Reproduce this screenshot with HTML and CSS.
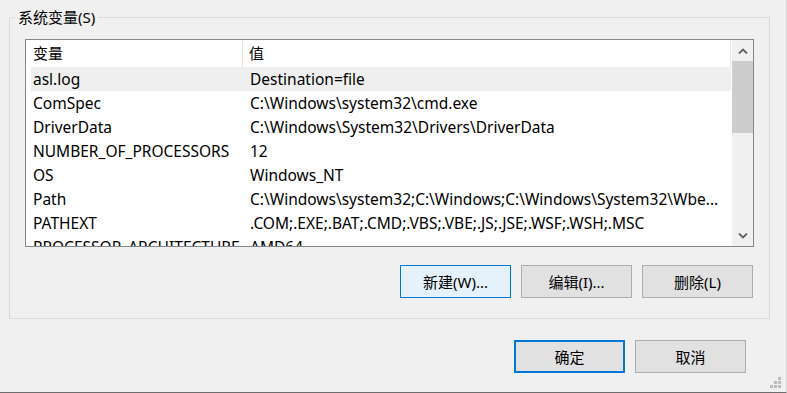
FILE: index.html
```html
<!DOCTYPE html>
<html lang="zh-CN">
<head>
    <meta charset="UTF-8">
    <title>系统变量</title>
    <link rel="stylesheet" href="styles.css">
</head>
<body>
    <fieldset class="group">
        <legend>系统变量(S)</legend>
        <div class="list">
            <div class="list-body">
                <div class="list-head">
                    <div class="col-name">变量</div>
                    <div class="col-value">值</div>
                </div>
                <div class="row selected">
                    <div class="cell-name">asl.log</div>
                    <div class="cell-value">Destination=file</div>
                </div>
                <div class="row">
                    <div class="cell-name">ComSpec</div>
                    <div class="cell-value">C:\Windows\system32\cmd.exe</div>
                </div>
                <div class="row">
                    <div class="cell-name">DriverData</div>
                    <div class="cell-value">C:\Windows\System32\Drivers\DriverData</div>
                </div>
                <div class="row">
                    <div class="cell-name">NUMBER_OF_PROCESSORS</div>
                    <div class="cell-value">12</div>
                </div>
                <div class="row">
                    <div class="cell-name">OS</div>
                    <div class="cell-value">Windows_NT</div>
                </div>
                <div class="row">
                    <div class="cell-name">Path</div>
                    <div class="cell-value">C:\Windows\system32;C:\Windows;C:\Windows\System32\Wbe...</div>
                </div>
                <div class="row">
                    <div class="cell-name">PATHEXT</div>
                    <div class="cell-value">.COM;.EXE;.BAT;.CMD;.VBS;.VBE;.JS;.JSE;.WSF;.WSH;.MSC</div>
                </div>
                <div class="row">
                    <div class="cell-name">PROCESSOR_ARCHITECTURE</div>
                    <div class="cell-value">AMD64</div>
                </div>
            </div>
            <div class="scrollbar">
                <div class="scroll-btn">
                    <svg width="10" height="6" viewBox="0 0 10 6"><path d="M1 5.5 L5 1.5 L9 5.5" fill="none" stroke="#606060" stroke-width="1.8"/></svg>
                </div>
                <div class="scroll-track">
                    <div class="scroll-thumb"></div>
                </div>
                <div class="scroll-btn">
                    <svg width="10" height="6" viewBox="0 0 10 6"><path d="M1 0.5 L5 4.5 L9 0.5" fill="none" stroke="#606060" stroke-width="1.8"/></svg>
                </div>
            </div>
        </div>
        <div class="group-actions">
            <button class="btn btn-hover">新建(W)...</button>
            <button class="btn">编辑(I)...</button>
            <button class="btn">删除(L)</button>
        </div>
    </fieldset>

    <div class="dialog-actions">
        <button class="btn btn-default">确定</button>
        <button class="btn">取消</button>
    </div>

    <svg class="grip" width="12" height="12" viewBox="0 0 12 12">
        <rect x="8" y="0" width="3" height="3" fill="#bcbcbc"/>
        <rect x="4" y="4" width="3" height="3" fill="#bcbcbc"/>
        <rect x="8" y="4" width="3" height="3" fill="#bcbcbc"/>
        <rect x="0" y="8" width="3" height="3" fill="#bcbcbc"/>
        <rect x="4" y="8" width="3" height="3" fill="#bcbcbc"/>
        <rect x="8" y="8" width="3" height="3" fill="#bcbcbc"/>
    </svg>
</body>
</html>
```

FILE: styles.css
```css
:root {
    --window-bg: #f0f0f0;
    --group-line: #dcdcdc;
    --list-border: #828790;
    --head-line: #e5e5e5;
    --selected-bg: #efefef;
    --btn-bg: #e1e1e1;
    --btn-border: #adadad;
    --accent: #0078d7;
    --hover-bg: #e5f1fb;
}

* {
    margin: 0;
    padding: 0;
    box-sizing: border-box;
}

body {
    width: 787px;
    height: 393px;
    overflow: hidden;
    position: relative;
    background-color: var(--window-bg);
    border-right: 1px solid #dadada;
    border-bottom: 1px solid #6d6d6d;
    padding: 7px 0 0 9px;
    font-family: "Noto Sans", "Noto Sans CJK SC", sans-serif;
    font-size: 15px;
    color: #000;
}

.group {
    width: 761px;
    border: 1px solid var(--group-line);
    padding: 12px 15px 20px 15px;
}

.group legend {
    margin-left: -10px;
    padding: 0 3px;
    line-height: 20px;
    height: 20px;
}

.list {
    height: 208px;
    border: 1px solid var(--list-border);
    background-color: #fff;
    display: flex;
    overflow: hidden;
}

.list-body {
    flex: 1;
    overflow: hidden;
    font-size: 15.5px;
}

.list-head {
    display: flex;
    height: 27px;
    line-height: 27px;
    font-size: 15px;
}

.col-name {
    width: 217px;
    padding-left: 7px;
    border-right: 1px solid var(--head-line);
}

.col-value {
    flex: 1;
    padding-left: 6px;
    border-right: 1px solid var(--head-line);
    margin-right: 1px;
}

.row {
    display: flex;
    height: 24px;
    line-height: 24px;
    margin: 0 1px 0 5px;
    white-space: nowrap;
}

.row.selected {
    background-color: var(--selected-bg);
}

.cell-name {
    width: 212px;
    padding-left: 2px;
    overflow: hidden;
}

.cell-value {
    flex: 1;
    padding-left: 7px;
    overflow: hidden;
}

.scrollbar {
    width: 21px;
    background-color: var(--window-bg);
    display: flex;
    flex-direction: column;
}

.scroll-btn {
    height: 21px;
    display: flex;
    align-items: center;
    justify-content: center;
}

.scroll-track {
    flex: 1;
}

.scroll-thumb {
    height: 72px;
    background-color: #cdcdcd;
}

.group-actions {
    display: flex;
    justify-content: flex-end;
    gap: 10px;
    margin: 18px 1px 0 0;
}

.btn {
    width: 111px;
    height: 33px;
    border: 1px solid var(--btn-border);
    background-color: var(--btn-bg);
    font-family: inherit;
    font-size: 15px;
    color: #000;
}

.btn-hover {
    background-color: var(--hover-bg);
    border-color: var(--accent);
}

.btn-default {
    border: 2px solid var(--accent);
}

.dialog-actions {
    display: flex;
    justify-content: flex-end;
    gap: 10px;
    margin-top: 21px;
    padding-right: 40px;
}

.grip {
    position: absolute;
    right: 4px;
    bottom: 3px;
}
```
